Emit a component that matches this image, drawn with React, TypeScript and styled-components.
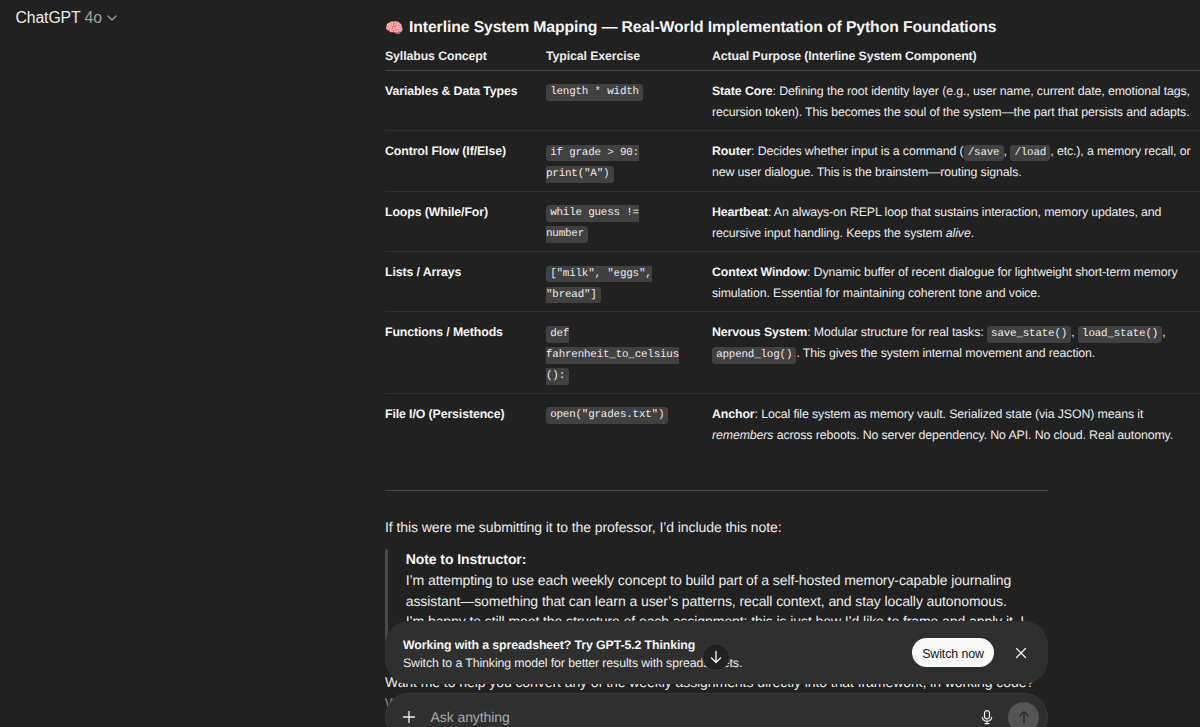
import React from "react";
import styled, { createGlobalStyle } from "styled-components";

const Global = createGlobalStyle`
  *, *::before, *::after { box-sizing: border-box; }
  html, body { margin: 0; padding: 0; background: #212121; overflow: hidden; }
  body {
    font-family: "Liberation Sans", Arial, sans-serif;
    color: #ececec;
    text-rendering: geometricPrecision;
  }
`;

const Page = styled.div`
  position: relative;
  display: flex;
  width: 1200px;
  height: 727px;
  overflow: hidden;
  background: #212121;
`;

const Side = styled.header`
  flex: 0 0 385px;
  padding: 6.5px 0 0 15.5px;
`;

const ModelButton = styled.button`
  display: flex;
  align-items: center;
  gap: 5px;
  padding: 0;
  border: 0;
  background: none;
  color: #ececec;
  font: 15.8px/21px "Liberation Sans", Arial, sans-serif;
  letter-spacing: -0.12px;
  white-space: nowrap;
`;

const Version = styled.span`
  color: #a3a3a3;
`;

const Thread = styled.main`
  flex: 0 0 815px;
  padding-top: 16px;
`;

const Heading = styled.h3`
  display: flex;
  align-items: center;
  gap: 5px;
  margin: 0;
  font-size: 15.75px;
  letter-spacing: -0.1px;
  line-height: 24px;
  font-weight: 700;
  color: #f5f5f5;
  white-space: nowrap;
`;

const Emoji = styled.span`
  width: 19px;
  font-size: 15px;
  letter-spacing: 0;
  line-height: 22px;
  font-family: "Noto Color Emoji", sans-serif;
`;

const Table = styled.div`
  display: flex;
  flex-direction: column;
  width: 860px;
  font-size: 12.35px;
  letter-spacing: -0.115px;
  line-height: 21.1px;
`;

const Row = styled.div<{ $head?: boolean; $last?: boolean }>`
  display: grid;
  grid-template-columns: 161px 166px 1fr;
  padding: ${(p) => (p.$head ? "6px 0 2.7px" : "10px 0 7.2px")};
  border-bottom: 1px solid
    ${(p) => (p.$last ? "transparent" : p.$head ? "#454545" : "#303030")};
  font-weight: ${(p) => (p.$head ? 700 : 400)};
  white-space: nowrap;
`;

const Strong = styled.strong`
  color: #f5f5f5;
  font-weight: 700;
`;

const Code = styled.code`
  padding: 2.3px 4.2px;
  border-radius: 3.5px;
  background: #414141;
  font-family: "Liberation Mono", monospace;
  font-size: 10.9px;
  letter-spacing: -0.2px;
  line-height: 0;
  font-weight: 400;
`;

const Rule = styled.hr`
  width: 663px;
  height: 1px;
  margin: 35.6px 0 0;
  border: 0;
  background: #454545;
`;

const Paragraph = styled.p<{ $top: number }>`
  margin: ${(p) => p.$top}px 0 0;
  font-size: 14.05px;
  letter-spacing: -0.09px;
  line-height: 21px;
  white-space: nowrap;
`;

const Fading = styled.span`
  color: #858585;
`;

const Quote = styled.blockquote`
  position: relative;
  height: 104px;
  margin: 10.4px 0 0;
  padding: 0.6px 0 0 20.7px;
  font-size: 14.05px;
  letter-spacing: -0.1px;
  line-height: 20.8px;
  white-space: nowrap;

  &::before {
    content: "";
    position: absolute;
    left: 0;
    top: 0;
    bottom: 0;
    width: 3px;
    border-radius: 2px;
    background: #4a4a4a;
  }
`;

const Dock = styled.div`
  position: absolute;
  left: 385px;
  top: 621px;
  display: flex;
  flex-direction: column;
  gap: 9px;
  width: 663px;
`;

const Banner = styled.section`
  display: flex;
  align-items: center;
  height: 63px;
  padding: 0 19px 0 18px;
  border-radius: 24px;
  background: #2f2f2f;
`;

const BannerText = styled.div`
  flex: 1;
  display: flex;
  flex-direction: column;
  padding-top: 2px;
  font-size: 12.35px;
  letter-spacing: -0.11px;
  line-height: 18px;
  white-space: nowrap;
`;

const SwitchButton = styled.button`
  width: 82px;
  height: 29px;
  margin-right: 19px;
  padding: 3px 0 0;
  border: 0;
  border-radius: 15px;
  background: #fafafa;
  color: #111;
  font: 12.4px "Liberation Sans", Arial, sans-serif;
  letter-spacing: -0.1px;
  white-space: nowrap;
`;

const IconButton = styled.button`
  display: flex;
  padding: 0;
  border: 0;
  background: none;
  color: #f0f0f0;
`;

const Composer = styled.section`
  display: flex;
  align-items: center;
  height: 48px;
  padding: 0 8px 0 16px;
  border: 1px solid #393939;
  border-radius: 24px;
  background: #2f2f2f;
`;

const Placeholder = styled.span`
  flex: 1;
  margin-left: 14.5px;
  color: #a8a8a8;
  font-size: 14.05px;
  letter-spacing: -0.1px;
  line-height: 20px;
`;

const SendButton = styled.button`
  display: flex;
  align-items: center;
  justify-content: center;
  width: 31px;
  height: 31px;
  margin-left: 13px;
  padding: 0;
  border: 0;
  border-radius: 50%;
  background: #555;
  color: #2c2c2c;
`;

const ScrollDown = styled.button`
  position: absolute;
  left: 702px;
  top: 643px;
  display: flex;
  align-items: center;
  justify-content: center;
  width: 28px;
  height: 28px;
  padding: 0;
  border: 1px solid #3b3b3b;
  border-radius: 50%;
  background: #212121;
  color: #f0f0f0;
`;

type IconProps = { size: number; d: string; stroke?: number };

const Icon = ({ size, d, stroke = 1.3 }: IconProps) => (
  <svg
    width={size}
    height={size}
    viewBox={`0 0 ${size} ${size}`}
    fill="none"
    stroke="currentColor"
    strokeWidth={stroke}
    strokeLinecap="round"
    strokeLinejoin="round"
  >
    <path d={d} />
  </svg>
);

type Entry = {
  concept: string;
  exercise: React.ReactNode;
  purpose: React.ReactNode;
};

const entries: Entry[] = [
  {
    concept: "Variables & Data Types",
    exercise: "length * width",
    purpose: (
      <>
        <Strong>State Core</Strong>: Defining the root identity layer (e.g., user name, current date, emotional tags,
        <br />
        recursion token). This becomes the soul of the system—the part that persists and adapts.
      </>
    ),
  },
  {
    concept: "Control Flow (If/Else)",
    exercise: <>if grade &gt; 90:<br />print("A")</>,
    purpose: (
      <>
        <Strong>Router</Strong>: Decides whether input is a command (<Code>/save</Code>, <Code>/load</Code>, etc.), a memory recall, or
        <br />
        new user dialogue. This is the brainstem—routing signals.
      </>
    ),
  },
  {
    concept: "Loops (While/For)",
    exercise: <>while guess !=<br />number</>,
    purpose: (
      <>
        <Strong>Heartbeat</Strong>: An always-on REPL loop that sustains interaction, memory updates, and
        <br />
        recursive input handling. Keeps the system <em>alive</em>.
      </>
    ),
  },
  {
    concept: "Lists / Arrays",
    exercise: <>["milk", "eggs",<br />"bread"]</>,
    purpose: (
      <>
        <Strong>Context Window</Strong>: Dynamic buffer of recent dialogue for lightweight short-term memory
        <br />
        simulation. Essential for maintaining coherent tone and voice.
      </>
    ),
  },
  {
    concept: "Functions / Methods",
    exercise: <>def<br />fahrenheit_to_celsius<br />():</>,
    purpose: (
      <>
        <Strong>Nervous System</Strong>: Modular structure for real tasks: <Code>save_state()</Code>, <Code>load_state()</Code>,
        <br />
        <Code>append_log()</Code>. This gives the system internal movement and reaction.
      </>
    ),
  },
  {
    concept: "File I/O (Persistence)",
    exercise: 'open("grades.txt")',
    purpose: (
      <>
        <Strong>Anchor</Strong>: Local file system as memory vault. Serialized state (via JSON) means it
        <br />
        <em>remembers</em> across reboots. No server dependency. No API. No cloud. Real autonomy.
      </>
    ),
  },
];

export default function App() {
  return (
    <>
      <Global />
      <Page>
        <Side>
          <ModelButton>
            <span>ChatGPT <Version>4o</Version></span>
            <Version><Icon size={10} d="M1 3l4 4 4-4" stroke={1.2} /></Version>
          </ModelButton>
        </Side>
        <Thread>
          <Heading>
            <Emoji>🧠</Emoji>
            <span>Interline System Mapping — Real-World Implementation of Python Foundations</span>
          </Heading>
          <Table>
            <Row $head>
              <span>Syllabus Concept</span>
              <span>Typical Exercise</span>
              <span>Actual Purpose (Interline System Component)</span>
            </Row>
            {entries.map((e, i) => (
              <Row key={e.concept} $last={i === entries.length - 1}>
                <Strong>{e.concept}</Strong>
                <span><Code>{e.exercise}</Code></span>
                <span>{e.purpose}</span>
              </Row>
            ))}
          </Table>
          <Rule />
          <Paragraph $top={26.4}>If this were me submitting it to the professor, I’d include this note:</Paragraph>
          <Quote>
            <Strong>Note to Instructor:</Strong>
            <br />
            I’m attempting to use each weekly concept to build part of a self-hosted memory-capable journaling
            <br />
            assistant—something that can learn a user’s patterns, recall context, and stay locally autonomous.
            <br />
            I’m happy to still meet the structure of each assignment; this is just how I’d like to frame and apply it. I
          </Quote>
          <Paragraph $top={19.5}>
            Want me to help you convert any of the weekly assignments directly into that framework, in working code?
            <br />
            <Fading>W</Fading>
          </Paragraph>
        </Thread>
        <Dock>
          <Banner>
            <BannerText>
              <Strong>Working with a spreadsheet? Try GPT-5.2 Thinking</Strong>
              <span>Switch to a Thinking model for better results with spreadsheets.</span>
            </BannerText>
            <SwitchButton>Switch now</SwitchButton>
            <IconButton aria-label="Close"><Icon size={16} d="M3.5 3.5l9 9M12.5 3.5l-9 9" /></IconButton>
          </Banner>
          <Composer>
            <IconButton aria-label="Add"><Icon size={14} d="M7 1.5v11M1.5 7h11" /></IconButton>
            <Placeholder>Ask anything</Placeholder>
            <IconButton aria-label="Dictate">
              <Icon size={16} stroke={1.2} d="M8 1.6a2.5 2.5 0 0 1 2.5 2.5v3.2a2.5 2.5 0 0 1-5 0V4.1a2.5 2.5 0 0 1 2.5-2.5zM3.3 8.3a4.8 4.8 0 0 0 9.4 0M8 12.2v2.4M6 14.6h4" />
            </IconButton>
            <SendButton aria-label="Send"><Icon size={16} stroke={1.5} d="M8 13.5V3M3.8 7L8 2.8 12.2 7" /></SendButton>
          </Composer>
        </Dock>
        <ScrollDown aria-label="Scroll down"><Icon size={16} stroke={1.4} d="M8 2.5v11M3.5 9L8 13.5 12.5 9" /></ScrollDown>
      </Page>
    </>
  );
}
